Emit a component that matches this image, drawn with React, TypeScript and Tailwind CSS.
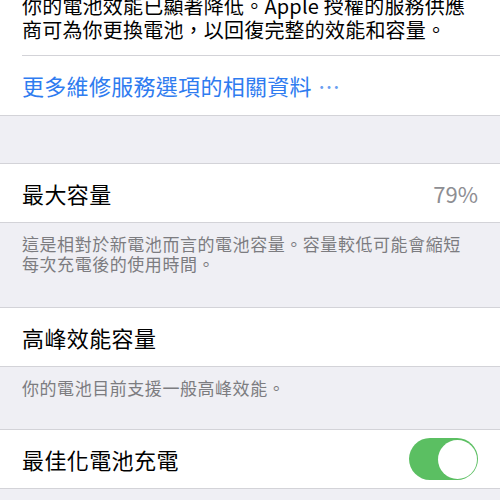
import React from 'react';

const font = { fontFamily: '"Noto Sans CJK TC", "Noto Sans", sans-serif' };

interface RowProps {
  label: string;
  children?: React.ReactNode;
}

const Row: React.FC<RowProps> = ({ label, children }) => (
  <div className="flex h-[60px] items-center justify-between border-y border-[#d3d3d8] bg-white pl-[22px] pr-[22px]">
    <span className="text-[22px] tracking-[0.4px] text-black">{label}</span>
    {children}
  </div>
);

const Footer: React.FC<{ children: React.ReactNode; className?: string }> = ({ children, className }) => (
  <p className={`px-[22px] pt-[11px] text-[17px] leading-[20px] tracking-[0.55px] text-[#7c7c80] ${className ?? ''}`}>
    {children}
  </p>
);

const Toggle: React.FC<{ on: boolean }> = ({ on }) => (
  <div
    className={`flex h-[42px] w-[69px] items-center rounded-full p-[1.5px] ${
      on ? 'justify-end bg-[#5bbf62]' : 'justify-start bg-[#e5e5ea]'
    }`}
  >
    <div className="h-[39px] w-[39px] rounded-full bg-white" />
  </div>
);

export default function App() {
  return (
    <div className="min-h-screen overflow-hidden bg-[#efeff4]" style={font}>
      <section className="border-b border-[#d3d3d8] bg-white">
        <p className="-mt-[6px] pl-[22px] pb-[13px] text-[20px] leading-[24px] tracking-[0.2px] text-black">
          你的電池效能已顯著降低。Apple 授權的服務供應
          <br />
          商可為你更換電池，以回復完整的效能和容量。
        </p>
        <div className="ml-[22px] border-t border-[#d3d3d8]" />
        <div className="flex h-[59px] items-center pl-[22px]">
          <span className="text-[22px] tracking-[0.3px] text-[#2f7cf0]">
            更多維修服務選項的相關資料<span className="ml-[6px] text-[#6a9ef0]">⋯</span>
          </span>
        </div>
      </section>

      <div className="h-[47px]" />

      <Row label="最大容量">
        <span className="text-[22px] text-[#8e8e93]">79%</span>
      </Row>
      <Footer className="h-[84px]">
        這是相對於新電池而言的電池容量。容量較低可能會縮短
        <br />
        每次充電後的使用時間。
      </Footer>

      <Row label="高峰效能容量" />
      <Footer className="h-[62px]">你的電池目前支援一般高峰效能。</Footer>

      <Row label="最佳化電池充電">
        <Toggle on />
      </Row>
    </div>
  );
}
